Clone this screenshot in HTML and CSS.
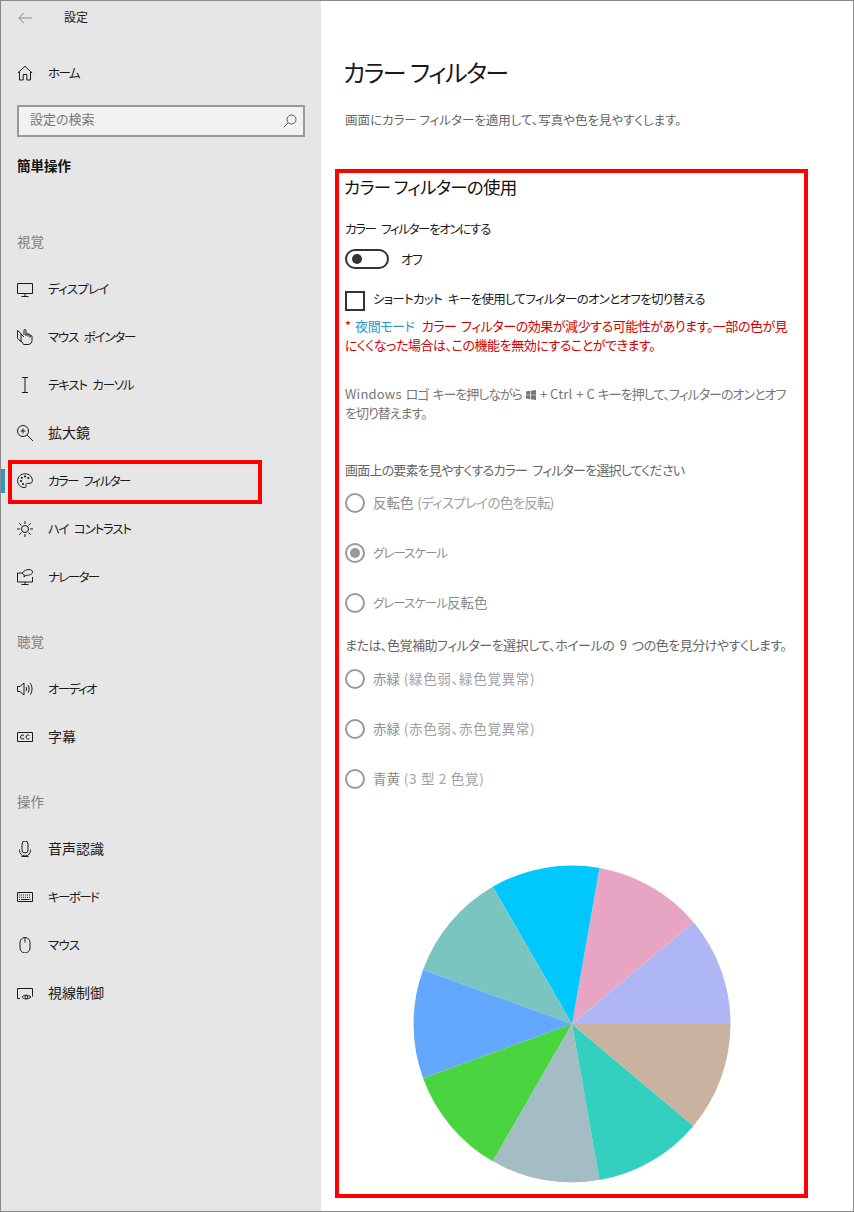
FILE: index.html
```html
<!DOCTYPE html>
<html lang="ja">
<head>
<meta charset="utf-8">
<title>設定</title>
<link rel="stylesheet" href="styles.css">
</head>
<body>
<div class="app">
  <aside class="sidebar">
    <div class="titlebar">
      <svg class="back" viewBox="0 0 14 12"><path d="M6 .8 .8 6 6 11.2M.8 6H14"/></svg>
      <span class="apptitle">設定</span>
    </div>
    <div class="nav-item home">
      <svg class="ico" viewBox="0 0 16 16"><path d="M2.5 15V6.5M13.5 15V6.5M.8 8 8 1.2 15.2 8M2.5 15h3.7V9.5h3.6V15h3.700"/></svg>
      <span class="tight-2">ホーム</span>
    </div>
    <div class="search">
      <span class="search-text">設定の検索</span>
      <svg class="search-ico" viewBox="0 0 14 14"><circle cx="8.500" cy="5.500" r="4.500"/><path d="M5.300 8.700.8 13.200"/></svg>
    </div>
    <div class="category">簡単操作</div>

    <div class="group">視覚</div>
    <div class="nav-item">
      <svg class="ico" viewBox="0 0 16 16"><path d="M.5 2.500h15v10H.5zM8 12.500v3M4.500 15.500h7"/></svg>
      <span class="tight-0">ディスプレイ</span>
    </div>
    <div class="nav-item">
      <svg class="ico" viewBox="0 0 16 16"><path d="M.5 1.500 4 4.500v8L.5 9.500ZM6.500 15.500 4 11.500M7 6V1.500a1 1 0 0 1 2 0V7M9 5.500a1 1 0 0 1 2 0V7.500M11 6a1 1 0 0 1 2 0v2.500M13 7.500a1 1 0 0 1 2 0v4c0 2-1.500 4-4 4H6.500M4 5l3 3"/></svg>
      <span class="tight-1">マウス ポインター</span>
    </div>
    <div class="nav-item">
      <svg class="ico" viewBox="0 0 16 16"><path d="M5 .5h6M5 15.500h6M8 .5v15"/></svg>
      <span class="tight-1">テキスト カーソル</span>
    </div>
    <div class="nav-item">
      <svg class="ico" viewBox="0 0 16 16"><circle cx="6" cy="6" r="5.500"/><path d="M3.500 6h5M6 3.500v5M10 10l6 6"/></svg>
      <span class="kanji">拡大鏡</span>
    </div>
    <div class="nav-item active">
      <i class="active-bar"></i>
      <svg class="ico" viewBox="0 0 16 16"><path d="M8 .8C3.500.8.600 4 .600 7.700c0 3.800 3 6.500 6.400 6.900 1.800.2 2.400-.9 2-2-.5-1.200 0-2.300 1.500-2.300h2.500c1.500 0 2.400-1 2.400-2.600C15.400 3.800 12.300.8 8 .8Z"/><circle class="dot" cx="4" cy="8" r="1.100"/><circle class="dot" cx="4.800" cy="4.800" r="1.100"/><circle class="dot" cx="8" cy="3.500" r="1.100"/><circle class="dot" cx="11.300" cy="5" r="1.100"/><circle class="dot" cx="6" cy="11" r="1.100"/></svg>
      <span class="tight-2">カラー フィルター</span>
      <i class="callout"></i>
    </div>
    <div class="nav-item">
      <svg class="ico" viewBox="0 0 16 16"><circle cx="8" cy="8" r="3.500"/><path d="M8 0v3M8 13v3M0 8h3M13 8h3M2.300 2.300l2.200 2.200M11.500 11.500l2.200 2.200M2.300 13.700l2.200-2.200M11.500 4.500l2.200-2.200"/></svg>
      <span class="tight-1">ハイ コントラスト</span>
    </div>
    <div class="nav-item">
      <svg class="ico" viewBox="0 0 16 16"><path d="M6 4H.5v9h15V8M8 13v3M4.500 15.500h7M5.500 4C7 1.500 9.500.5 12 .5c2 0 3.500 1 3.500 2.500 0 2.300-3 3.500-6.500 3.300L7 8l.3-2.200C6 5.500 5.500 5 5.500 4Z"/></svg>
      <span class="tight-2">ナレーター</span>
    </div>

    <div class="group gap">聴覚</div>
    <div class="nav-item">
      <svg class="ico" viewBox="0 0 16 16"><path d="M.5 5.500v5h2.500l4 3.500V2L3 5.500ZM9 6c.8 1.200.8 2.800 0 4M11 4.200c1.500 2.300 1.500 5.300 0 7.600M13.200 2.200c2.400 3.500 2.400 8.100 0 11.600"/></svg>
      <span class="tight-2">オーディオ</span>
    </div>
    <div class="nav-item">
      <svg class="ico" viewBox="0 0 16 16"><path d="M.5 3.500h15v9H.5zM7 6.500c-1-1-3.500-.8-3.500 1.500s2.500 2.500 3.500 1.500M12.500 6.500c-1-1-3.500-.8-3.500 1.500s2.500 2.500 3.500 1.500"/></svg>
      <span class="kanji">字幕</span>
    </div>

    <div class="group gap">操作</div>
    <div class="nav-item">
      <svg class="ico" viewBox="0 0 16 16"><path d="M5 3a3 3 0 0 1 6 0v6a3 3 0 0 1-6 0ZM2.500 8.500v1a5.500 5.500 0 0 0 11 0v-1M8 15v1M4.500 15.500h7"/></svg>
      <span class="kanji">音声認識</span>
    </div>
    <div class="nav-item">
      <svg class="ico" viewBox="0 0 16 16"><path d="M.5 3.500h15v9H.5zM4 10.500h8"/><path class="dash" d="M2 6h12M2 8.300h12M2 10.500h1.500M12.500 10.500H14"/></svg>
      <span class="tight-2">キーボード</span>
    </div>
    <div class="nav-item">
      <svg class="ico" viewBox="0 0 16 16"><path d="M3 5.500a5 5 0 0 1 10 0V11a5 5 0 0 1-10 0ZM8 .5v5"/></svg>
      <span class="tight-0">マウス</span>
    </div>
    <div class="nav-item">
      <svg class="ico" viewBox="0 0 16 16"><path d="M3 13.500H.5v-10h15v8M5 12c1.500-2.300 6-2.600 9 0-3 2.700-7.500 2.500-9 0Z"/><circle cx="9.500" cy="12" r="1.500"/></svg>
      <span class="kanji">視線制御</span>
    </div>
  </aside>

  <main class="content">
    <h1 class="page-title">カラー フィルター</h1>
    <p class="page-sub">画面にカラー フィルターを適用して、写真や色を見やすくします。</p>

    <section class="panel">
      <h2 class="panel-title">カラー フィルターの使用</h2>
      <div class="label">カラー フィルターをオンにする</div>
      <div class="toggle-row">
        <span class="toggle"><i></i></span>
        <span class="toggle-text">オフ</span>
      </div>
      <div class="check-row">
        <span class="checkbox"></span>
        <span class="check-text">ショートカット キーを使用してフィルターのオンとオフを切り替える</span>
      </div>
      <p class="warning">* <a class="link">夜間モード</a> カラー フィルターの効果が減少する可能性があります。一部の色が見<br>にくくなった場合は、この機能を無効にすることができます。</p>
      <p class="hint"><span class="latin">Windows</span> ロゴ キーを押しながら <svg class="win" viewBox="0 0 10 10"><path d="M0 1.400 4.300.8v3.900H0zM5 .7 10 0v4.700H5zM0 5.300h4.300v3.900L0 8.600zM5 5.300h5V10l-5-.7z"/></svg> + <span class="latin">Ctrl</span> + C キーを押して、フィルターのオンとオフ<br>を切り替えます。</p>

      <div class="section-label first">画面上の要素を見やすくするカラー フィルターを選択してください</div>
      <div class="radio-row"><span class="radio"></span><span class="radio-text"><b>反転色</b> <span class="kana-note">(ディスプレイの色を反転)</span></span></div>
      <div class="radio-row"><span class="radio on"></span><span class="radio-text"><b class="kana">グレースケール</b></span></div>
      <div class="radio-row"><span class="radio"></span><span class="radio-text"><b class="kana">グレースケール</b><b>反転色</b></span></div>

      <div class="section-label second">または、色覚補助フィルターを選択して、ホイールの 9 つの色を見分けやすくします。</div>
      <div class="radio-row"><span class="radio"></span><span class="radio-text"><b>赤緑</b> (緑色弱、緑色覚異常)</span></div>
      <div class="radio-row"><span class="radio"></span><span class="radio-text"><b>赤緑</b> (赤色弱、赤色覚異常)</span></div>
      <div class="radio-row"><span class="radio"></span><span class="radio-text"><b>青黄</b> (3 型 2 色覚)</span></div>

      <svg class="wheel" viewBox="-159 -159 318 318">
        <path class="s1" d="M0 0 158.500 0A158.500 158.500 0 0 0 121.400 -101.900Z"/>
        <path class="s2" d="M0 0 121.400 -101.900A158.500 158.500 0 0 0 27.500 -156.100Z"/>
        <path class="s3" d="M0 0 27.500 -156.100A158.500 158.500 0 0 0 -79.250 -137.300Z"/>
        <path class="s4" d="M0 0 -79.250 -137.300A158.500 158.500 0 0 0 -148.900 -54.200Z"/>
        <path class="s5" d="M0 0 -148.900 -54.200A158.500 158.500 0 0 0 -148.900 54.200Z"/>
        <path class="s6" d="M0 0 -148.900 54.200A158.500 158.500 0 0 0 -79.250 137.300Z"/>
        <path class="s7" d="M0 0 -79.250 137.300A158.500 158.500 0 0 0 27.500 156.100Z"/>
        <path class="s8" d="M0 0 27.500 156.100A158.500 158.500 0 0 0 121.400 101.900Z"/>
        <path class="s9" d="M0 0 121.400 101.900A158.500 158.500 0 0 0 158.500 0Z"/>
      </svg>
    </section>
  </main>
</div>
</body>
</html>
```
FILE: styles.css
```css
* { box-sizing: border-box; }
html, body { margin: 0; padding: 0; }
body {
  font-family: "Noto Sans CJK JP", "Noto Sans", sans-serif;
  font-feature-settings: "palt";
  font-size: 13px;
  color: #1a1a1a;
  background: #fff;
}
.app {
  display: flex;
  width: 854px;
  height: 1212px;
  border: 1px solid #8a8a8a;
  overflow: hidden;
}
.sidebar {
  width: 320px;
  flex: none;
  background: #e6e6e6;
}
.titlebar {
  display: flex;
  align-items: center;
  height: 33px;
  padding-left: 17px;
}
.back { width: 14px; height: 12px; fill: none; stroke: #8c8c8c; stroke-width: 1; }
.apptitle { margin-left: 32px; font-size: 12px; line-height: 16px; padding-bottom: 1px; }

.nav-item {
  position: relative;
  display: flex;
  align-items: center;
  height: 48px;
  padding-left: 16px;
  gap: 15px;
  font-size: 13.500px;
  line-height: 20px;
}
.nav-item .kanji { padding-bottom: 2px; font-size: 14px; }
.nav-item .tight-0 { font-size: 12.500px; letter-spacing: -.800px; word-spacing: 4px; }
.nav-item .tight-1 { font-size: 12.500px; letter-spacing: -1.200px; word-spacing: 4px; }
.nav-item .tight-2 { font-size: 12.500px; letter-spacing: -1.600px; word-spacing: 4px; }
.nav-item.home { margin-top: 15px; }
.ico { width: 16px; height: 16px; flex: none; fill: none; stroke: #1a1a1a; stroke-width: 1; }
.ico .dot { fill: #1a1a1a; stroke: none; }
.ico .dash { stroke-dasharray: 1 1; }
.active-bar {
  position: absolute;
  left: 0;
  top: 12px;
  width: 4px;
  height: 24px;
  background: #2f96c8;
}
.callout {
  position: absolute;
  left: 7px;
  top: 3px;
  width: 254px;
  height: 44px;
  border: 4px solid #f00;
}
.search {
  display: flex;
  align-items: center;
  justify-content: space-between;
  width: 288px;
  height: 32px;
  margin: 8px 0 0 16px;
  padding: 0 6px 0 11px;
  background: #f2f2f2;
  border: 2px solid #999;
  color: #767676;
  font-size: 13px;
}
.search-text { margin-bottom: 6px; }
.search-ico { width: 14px; height: 14px; fill: none; stroke: #555; stroke-width: 1; }
.category {
  margin: 17px 0 0 16px;
  height: 24px;
  line-height: 22px;
  font-size: 13.500px;
  font-weight: 700;
  color: #111;
}
.group {
  margin: 52px 0 11px 16px;
  height: 24px;
  line-height: 22px;
  font-size: 13.500px;
  color: #808080;
}
.group.gap { margin-top: 29px; }

.content { flex: 1; min-width: 0; }
.page-title {
  margin: 51px 0 0 22px;
  height: 40px;
  font-size: 24px;
  line-height: 40px;
  font-weight: 400;
  letter-spacing: -1.500px;
  word-spacing: 1px;
  color: #1a1a1a;
}
.page-sub {
  margin: 18px 0 0 24px;
  height: 20px;
  line-height: 20px;
  font-size: 12.500px;
  color: #666;
}
.panel {
  width: 473px;
  height: 1029px;
  margin: 39px 0 0 14px;
  padding-left: 6px;
  border: 4px solid #f00;
}
.panel-title {
  margin: 0 0 0 -1px;
  height: 28px;
  font-size: 17.500px;
  line-height: 28px;
  font-weight: 400;
  letter-spacing: -.700px;
  color: #111;
}
.label {
  margin-top: 18px;
  height: 20px;
  line-height: 20px;
  font-size: 12.500px;
  letter-spacing: -1.350px;
  word-spacing: 4px;
}
.toggle-row {
  display: flex;
  align-items: center;
  gap: 12px;
  margin-top: 10px;
  height: 20px;
}
.toggle-text { letter-spacing: -1px; padding-bottom: 2px; }
.toggle {
  display: flex;
  align-items: center;
  width: 44px;
  height: 20px;
  padding-left: 5px;
  border: 2px solid #333;
  border-radius: 10px;
}
.toggle i { width: 10px; height: 10px; border-radius: 50%; background: #333; }
.check-row {
  display: flex;
  align-items: flex-start;
  gap: 8px;
  margin-top: 22px;
  height: 20px;
  line-height: 16px;
}
.check-text { font-size: 12.500px; letter-spacing: -.700px; word-spacing: 4px; }
.checkbox { width: 20px; height: 20px; border: 2px solid #333; }
.warning {
  margin: 6px 0 0;
  line-height: 18.500px;
  font-size: 13px;
  letter-spacing: -.450px;
  word-spacing: 2px;
  color: #d40000;
  white-space: nowrap;
}
.link { color: #2a96cc; margin-right: 3px; }
.hint {
  margin: 31px 0 0;
  line-height: 18.500px;
  font-size: 13px;
  letter-spacing: -1px;
  word-spacing: 2px;
  color: #767676;
  white-space: nowrap;
}
.latin { letter-spacing: .200px; }
.win { width: 10px; height: 10px; fill: #767676; vertical-align: -1px; }
.section-label {
  height: 20px;
  line-height: 20px;
  color: #666;
  white-space: nowrap;
}
.section-label.first { margin-top: 38px; letter-spacing: -.800px; word-spacing: 3px; }
.section-label.second { margin-top: 7px; letter-spacing: -.480px; word-spacing: 3px; }
.radio-row {
  display: flex;
  align-items: center;
  gap: 8px;
  height: 50px;
  color: #a0a0a0;
  font-size: 13.500px;
  letter-spacing: .700px;
  line-height: 20px;
}
.radio-text { padding-bottom: 2px; }
.kana-note { letter-spacing: -.700px; word-spacing: 0; }
.section-label.first + .radio-row { margin-top: -2px; }
.section-label.second + .radio-row { margin-top: -1px; }
.radio-row b { font-weight: 400; color: #8c8c8c; letter-spacing: 0; }
.radio-row b.kana { font-size: 12.500px; letter-spacing: -1px; }
.radio {
  display: flex;
  align-items: center;
  justify-content: center;
  width: 20px;
  height: 20px;
  border: 2px solid #999;
  border-radius: 50%;
}
.radio.on::after {
  content: "";
  width: 10px;
  height: 10px;
  border-radius: 50%;
  background: #999;
}
.wheel {
  display: block;
  width: 318px;
  height: 318px;
  margin: 61px 0 0 68px;
}
.s1 { fill: #aeb7f3; }
.s2 { fill: #e8a5c3; }
.s3 { fill: #00c8ff; }
.s4 { fill: #7ac5c0; }
.s5 { fill: #62a8ff; }
.s6 { fill: #4ad43f; }
.s7 { fill: #a4bcc4; }
.s8 { fill: #33cfbf; }
.s9 { fill: #cab2a1; }
```
